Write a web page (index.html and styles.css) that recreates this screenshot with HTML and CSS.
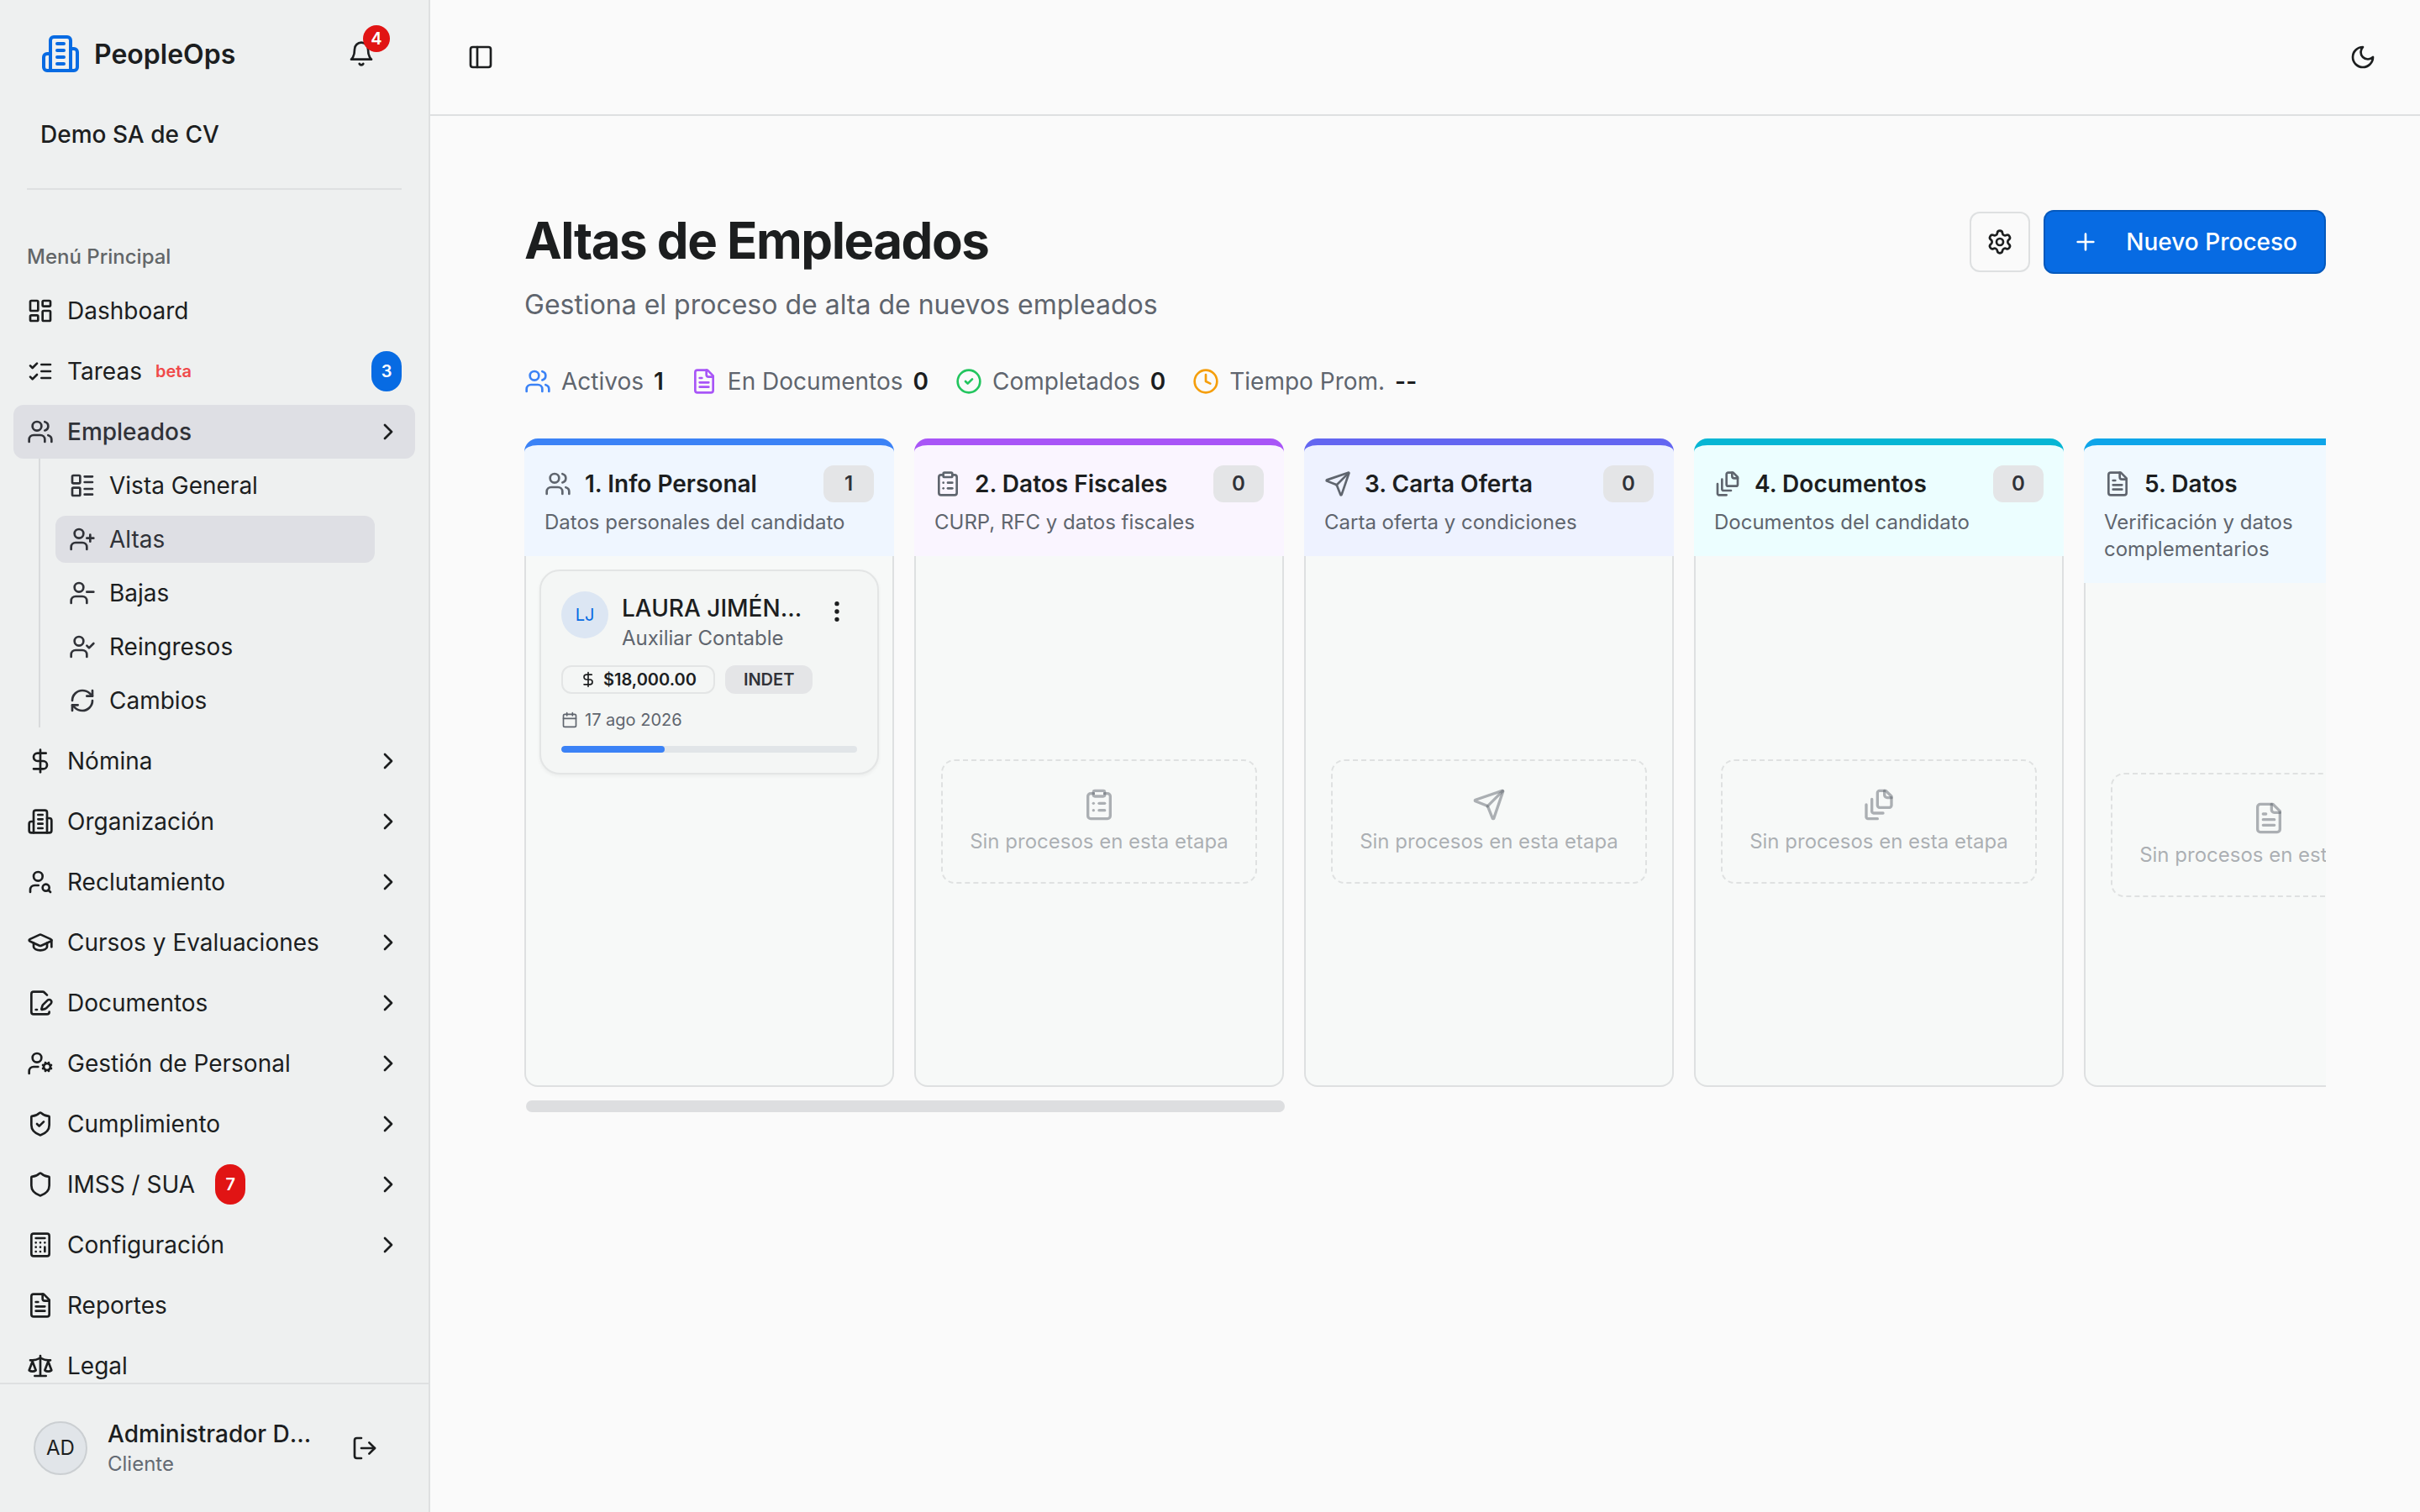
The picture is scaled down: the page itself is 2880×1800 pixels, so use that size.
FILE: index.html
```html
<!DOCTYPE html>
<html lang="es">
<head>
<meta charset="utf-8">
<title>PeopleOps – Altas de Empleados</title>
<link rel="stylesheet" href="styles.css">
</head>
<body>
<svg class="sprite" aria-hidden="true">
  <symbol id="building" viewBox="0 0 24 24"><path d="M6 22V4a2 2 0 0 1 2-2h8a2 2 0 0 1 2 2v18Z"/><path d="M6 12H4a2 2 0 0 0-2 2v6a2 2 0 0 0 2 2h2"/><path d="M18 9h2a2 2 0 0 1 2 2v9a2 2 0 0 1-2 2h-2"/><path d="M10 6h4M10 10h4M10 14h4M10 18h4"/></symbol>
  <symbol id="bell" viewBox="0 0 24 24"><path d="M6 8a6 6 0 0 1 12 0c0 7 3 9 3 9H3s3-2 3-9"/><path d="M10.3 21a1.94 1.94 0 0 0 3.4 0"/></symbol>
  <symbol id="dashboard" viewBox="0 0 24 24"><rect x="3" y="3" width="7" height="9" rx="1"/><rect x="14" y="3" width="7" height="5" rx="1"/><rect x="14" y="12" width="7" height="9" rx="1"/><rect x="3" y="16" width="7" height="5" rx="1"/></symbol>
  <symbol id="checks" viewBox="0 0 24 24"><path d="m3 17 2 2 4-4"/><path d="m3 7 2 2 4-4"/><path d="M13 6h8M13 12h8M13 18h8"/></symbol>
  <symbol id="users" viewBox="0 0 24 24"><path d="M16 21v-2a4 4 0 0 0-4-4H6a4 4 0 0 0-4 4v2"/><circle cx="9" cy="7" r="4"/><path d="M22 21v-2a4 4 0 0 0-3-3.87"/><path d="M16 3.13a4 4 0 0 1 0 7.75"/></symbol>
  <symbol id="layout-list" viewBox="0 0 24 24"><rect x="3" y="3" width="7" height="7" rx="1"/><rect x="3" y="14" width="7" height="7" rx="1"/><path d="M14 4h7M14 9h7M14 15h7M14 20h7"/></symbol>
  <symbol id="user-plus" viewBox="0 0 24 24"><path d="M16 21v-2a4 4 0 0 0-4-4H6a4 4 0 0 0-4 4v2"/><circle cx="9" cy="7" r="4"/><path d="M19 8v6M22 11h-6"/></symbol>
  <symbol id="user-minus" viewBox="0 0 24 24"><path d="M16 21v-2a4 4 0 0 0-4-4H6a4 4 0 0 0-4 4v2"/><circle cx="9" cy="7" r="4"/><path d="M22 11h-6"/></symbol>
  <symbol id="user-check" viewBox="0 0 24 24"><path d="M16 21v-2a4 4 0 0 0-4-4H6a4 4 0 0 0-4 4v2"/><circle cx="9" cy="7" r="4"/><path d="m16 11 2 2 4-4"/></symbol>
  <symbol id="refresh" viewBox="0 0 24 24"><path d="M3 12a9 9 0 0 1 9-9 9.75 9.75 0 0 1 6.74 2.74L21 8"/><path d="M21 3v5h-5"/><path d="M21 12a9 9 0 0 1-9 9 9.75 9.75 0 0 1-6.74-2.74L3 16"/><path d="M8 16H3v5"/></symbol>
  <symbol id="dollar" viewBox="0 0 24 24"><path d="M12 2v20"/><path d="M17 5H9.5a3.5 3.5 0 0 0 0 7h5a3.5 3.5 0 0 1 0 7H6"/></symbol>
  <symbol id="user-search" viewBox="0 0 24 24"><circle cx="10" cy="7" r="4"/><path d="M10.3 15H7a4 4 0 0 0-4 4v2"/><circle cx="17" cy="17" r="3"/><path d="m21 21-1.9-1.9"/></symbol>
  <symbol id="cap" viewBox="0 0 24 24"><path d="M21.42 10.922a1 1 0 0 0-.019-1.838L12.83 5.18a2 2 0 0 0-1.66 0L2.6 9.08a1 1 0 0 0 0 1.832l8.57 3.908a2 2 0 0 0 1.66 0z"/><path d="M22 10v6"/><path d="M6 12.5V16a6 3 0 0 0 12 0v-3.5"/></symbol>
  <symbol id="file-pen" viewBox="0 0 24 24"><path d="m18 5-2.414-2.414A2 2 0 0 0 14.172 2H6a2 2 0 0 0-2 2v16a2 2 0 0 0 2 2h12a2 2 0 0 0 2-2"/><path d="M21.378 12.626a1 1 0 0 0-3.004-3.004l-4.01 4.012a2 2 0 0 0-.506.854l-.837 2.87a.5.5 0 0 0 .62.62l2.87-.837a2 2 0 0 0 .854-.506z"/><path d="M8 18h1"/></symbol>
  <symbol id="user-cog" viewBox="0 0 24 24"><path d="M10 15H6a4 4 0 0 0-4 4v2"/><circle cx="9" cy="7" r="4"/><circle cx="18" cy="15" r="3"/><path d="m14.305 16.53.923-.382M15.228 13.852l-.923-.383M16.852 12.228l-.383-.923M16.852 17.772l-.383.924M19.148 12.228l.383-.923M19.53 18.696l-.382-.924M20.772 13.852l.924-.383M20.772 16.148l.924.383"/></symbol>
  <symbol id="shield" viewBox="0 0 24 24"><path d="M20 13c0 5-3.5 7.5-7.66 8.95a1 1 0 0 1-.67-.01C7.5 20.5 4 18 4 13V6a1 1 0 0 1 1-1c2 0 4.5-1.2 6.24-2.72a1.17 1.17 0 0 1 1.52 0C14.51 3.81 17 5 19 5a1 1 0 0 1 1 1z"/></symbol>
  <symbol id="shield-check" viewBox="0 0 24 24"><path d="M20 13c0 5-3.5 7.5-7.66 8.95a1 1 0 0 1-.67-.01C7.5 20.5 4 18 4 13V6a1 1 0 0 1 1-1c2 0 4.5-1.2 6.24-2.72a1.17 1.17 0 0 1 1.52 0C14.51 3.81 17 5 19 5a1 1 0 0 1 1 1z"/><path d="m9 12 2 2 4-4"/></symbol>
  <symbol id="calculator" viewBox="0 0 24 24"><rect x="4" y="2" width="16" height="20" rx="2"/><path d="M8 6h8M16 14v4M16 10h.01M12 10h.01M8 10h.01M12 14h.01M8 14h.01M12 18h.01M8 18h.01"/></symbol>
  <symbol id="file-text" viewBox="0 0 24 24"><path d="M15 2H6a2 2 0 0 0-2 2v16a2 2 0 0 0 2 2h12a2 2 0 0 0 2-2V7Z"/><path d="M14 2v4a2 2 0 0 0 2 2h4"/><path d="M10 9H8M16 13H8M16 17H8"/></symbol>
  <symbol id="scale" viewBox="0 0 24 24"><path d="m16 16 3-8 3 8c-.87.65-1.92 1-3 1s-2.13-.35-3-1Z"/><path d="m2 16 3-8 3 8c-.87.65-1.92 1-3 1s-2.13-.35-3-1Z"/><path d="M7 21h10M12 3v18"/><path d="M3 7h2c2 0 5-1 7-2 2 1 5 2 7 2h2"/></symbol>
  <symbol id="logout" viewBox="0 0 24 24"><path d="M9 21H5a2 2 0 0 1-2-2V5a2 2 0 0 1 2-2h4"/><path d="m16 17 5-5-5-5"/><path d="M21 12H9"/></symbol>
  <symbol id="chevron" viewBox="0 0 24 24"><path d="m9 18 6-6-6-6"/></symbol>
  <symbol id="panel" viewBox="0 0 24 24"><rect x="3" y="3" width="18" height="18" rx="2"/><path d="M9 3v18"/></symbol>
  <symbol id="moon" viewBox="0 0 24 24"><path d="M12 3a6 6 0 0 0 9 9 9 9 0 1 1-9-9Z"/></symbol>
  <symbol id="settings" viewBox="0 0 24 24"><path d="M9.671 4.136a2.34 2.34 0 0 1 4.659 0 2.34 2.34 0 0 0 3.319 1.915 2.34 2.34 0 0 1 2.33 4.033 2.34 2.34 0 0 0 0 3.831 2.34 2.34 0 0 1-2.33 4.033 2.34 2.34 0 0 0-3.319 1.915 2.34 2.34 0 0 1-4.659 0 2.34 2.34 0 0 0-3.32-1.915 2.34 2.34 0 0 1-2.33-4.033 2.34 2.34 0 0 0 0-3.831A2.34 2.34 0 0 1 6.35 6.051a2.34 2.34 0 0 0 3.319-1.915"/><circle cx="12" cy="12" r="3"/></symbol>
  <symbol id="plus" viewBox="0 0 24 24"><path d="M5 12h14M12 5v14"/></symbol>
  <symbol id="circle-check" viewBox="0 0 24 24"><circle cx="12" cy="12" r="10"/><path d="m9 12 2 2 4-4"/></symbol>
  <symbol id="clock" viewBox="0 0 24 24"><circle cx="12" cy="12" r="10"/><path d="M12 6v6l4 2"/></symbol>
  <symbol id="clipboard" viewBox="0 0 24 24"><rect x="8" y="2" width="8" height="4" rx="1"/><path d="M16 4h2a2 2 0 0 1 2 2v14a2 2 0 0 1-2 2H6a2 2 0 0 1-2-2V6a2 2 0 0 1 2-2h2"/><path d="M12 11h4"/><path d="M12 16h4"/><path d="M8 11h.01"/><path d="M8 16h.01"/></symbol>
  <symbol id="send" viewBox="0 0 24 24"><path d="M14.536 21.686a.5.5 0 0 0 .937-.024l6.5-19a.496.496 0 0 0-.635-.635l-19 6.5a.5.5 0 0 0-.024.937l7.93 3.18a2 2 0 0 1 1.112 1.11z"/><path d="m21.854 2.147-10.94 10.939"/></symbol>
  <symbol id="file-stack" viewBox="0 0 24 24"><path d="M21 7h-3a2 2 0 0 1-2-2V2"/><path d="M21 6v6.5c0 .8-.7 1.5-1.5 1.5h-7c-.8 0-1.5-.7-1.5-1.5v-9c0-.8.7-1.5 1.5-1.5H17Z"/><path d="M7 8v8.8c0 .3.2.6.4.8.2.2.5.4.8.4H15"/><path d="M3 12v8.8c0 .3.2.6.4.8.2.2.5.4.8.4H11"/></symbol>
  <symbol id="calendar" viewBox="0 0 24 24"><path d="M8 2v4M16 2v4"/><rect x="3" y="4" width="18" height="18" rx="2"/><path d="M3 10h18"/></symbol>
  <symbol id="dots" viewBox="0 0 24 24"><circle cx="12" cy="12" r="1"/><circle cx="12" cy="5" r="1"/><circle cx="12" cy="19" r="1"/></symbol>
</svg>
<div class="app">
  <aside class="sidebar">
    <div class="side-head">
      <div class="brand-row">
        <svg class="icon brand-icon"><use href="#building"/></svg>
        <span class="brand">PeopleOps</span>
        <button class="icon-btn bell" type="button" aria-label="Notificaciones"><svg class="icon"><use href="#bell"/></svg><span class="bell-count">4</span></button>
      </div>
      <div class="company">Demo SA de CV</div>
    </div>
    <nav class="nav" aria-label="Menú Principal">
      <h2 class="nav-label">Menú Principal</h2>
      <ul class="nav-list">
        <li><a class="nav-item" href="#"><svg class="icon"><use href="#dashboard"/></svg>Dashboard</a></li>
        <li><a class="nav-item" href="#"><svg class="icon"><use href="#checks"/></svg>Tareas<span class="beta">beta</span><span class="count count-end">3</span></a></li>
        <li>
          <button class="nav-item current" type="button" aria-expanded="true"><svg class="icon"><use href="#users"/></svg>Empleados<svg class="icon chevron"><use href="#chevron"/></svg></button>
          <ul class="sub-list">
            <li><a class="sub-item" href="#"><svg class="icon"><use href="#layout-list"/></svg>Vista General</a></li>
            <li><a class="sub-item selected" href="#" aria-current="page"><svg class="icon"><use href="#user-plus"/></svg>Altas</a></li>
            <li><a class="sub-item" href="#"><svg class="icon"><use href="#user-minus"/></svg>Bajas</a></li>
            <li><a class="sub-item" href="#"><svg class="icon"><use href="#user-check"/></svg>Reingresos</a></li>
            <li><a class="sub-item" href="#"><svg class="icon"><use href="#refresh"/></svg>Cambios</a></li>
          </ul>
        </li>
        <li><button class="nav-item" type="button"><svg class="icon"><use href="#dollar"/></svg>Nómina<svg class="icon chevron"><use href="#chevron"/></svg></button></li>
        <li><button class="nav-item" type="button"><svg class="icon"><use href="#building"/></svg>Organización<svg class="icon chevron"><use href="#chevron"/></svg></button></li>
        <li><button class="nav-item" type="button"><svg class="icon"><use href="#user-search"/></svg>Reclutamiento<svg class="icon chevron"><use href="#chevron"/></svg></button></li>
        <li><button class="nav-item" type="button"><svg class="icon"><use href="#cap"/></svg>Cursos y Evaluaciones<svg class="icon chevron"><use href="#chevron"/></svg></button></li>
        <li><button class="nav-item" type="button"><svg class="icon"><use href="#file-pen"/></svg>Documentos<svg class="icon chevron"><use href="#chevron"/></svg></button></li>
        <li><button class="nav-item" type="button"><svg class="icon"><use href="#user-cog"/></svg>Gestión de Personal<svg class="icon chevron"><use href="#chevron"/></svg></button></li>
        <li><button class="nav-item" type="button"><svg class="icon"><use href="#shield-check"/></svg>Cumplimiento<svg class="icon chevron"><use href="#chevron"/></svg></button></li>
        <li><button class="nav-item" type="button"><svg class="icon"><use href="#shield"/></svg>IMSS / SUA<span class="count count-alert">7</span><svg class="icon chevron"><use href="#chevron"/></svg></button></li>
        <li><button class="nav-item" type="button"><svg class="icon"><use href="#calculator"/></svg>Configuración<svg class="icon chevron"><use href="#chevron"/></svg></button></li>
        <li><a class="nav-item" href="#"><svg class="icon"><use href="#file-text"/></svg>Reportes</a></li>
        <li><a class="nav-item" href="#"><svg class="icon"><use href="#scale"/></svg>Legal</a></li>
      </ul>
    </nav>
    <div class="side-foot">
      <span class="avatar">AD</span>
      <div class="who"><div class="who-name">Administrador Demo</div><div class="who-role">Cliente</div></div>
      <button class="icon-btn" type="button" aria-label="Cerrar sesión"><svg class="icon"><use href="#logout"/></svg></button>
    </div>
  </aside>
  <div class="main">
    <header class="topbar">
      <button class="icon-btn" type="button" aria-label="Alternar menú"><svg class="icon"><use href="#panel"/></svg></button>
      <button class="icon-btn" type="button" aria-label="Cambiar tema"><svg class="icon"><use href="#moon"/></svg></button>
    </header>
    <main class="content">
      <div class="page-head">
        <div>
          <h1 class="title">Altas de Empleados</h1>
          <p class="subtitle">Gestiona el proceso de alta de nuevos empleados</p>
        </div>
        <div class="actions">
          <button class="btn-settings" type="button" aria-label="Configurar etapas"><svg class="icon"><use href="#settings"/></svg></button>
          <button class="btn-primary" type="button"><svg class="icon"><use href="#plus"/></svg>Nuevo Proceso</button>
        </div>
      </div>
      <ul class="stats">
        <li class="stat"><svg class="icon blue"><use href="#users"/></svg>Activos <strong>1</strong></li>
        <li class="stat"><svg class="icon purple"><use href="#file-text"/></svg>En Documentos <strong>0</strong></li>
        <li class="stat"><svg class="icon green"><use href="#circle-check"/></svg>Completados <strong>0</strong></li>
        <li class="stat"><svg class="icon amber"><use href="#clock"/></svg>Tiempo Prom. <strong>--</strong></li>
      </ul>
      <div class="board">
        <section class="column">
          <header class="col-head info">
            <div class="col-row"><svg class="icon"><use href="#users"/></svg><h3 class="col-title">1. Info Personal</h3><span class="col-count">1</span></div>
            <p class="col-desc">Datos personales del candidato</p>
          </header>
          <div class="col-body">
            <article class="card">
              <div class="card-top">
                <span class="card-avatar">LJ</span>
                <div class="card-person"><div class="card-name">LAURA JIMÉNEZ</div><div class="card-role">Auxiliar Contable</div></div>
                <button class="card-menu" type="button" aria-label="Acciones"><svg class="icon"><use href="#dots"/></svg></button>
              </div>
              <div class="chips"><span class="chip"><svg class="icon tiny"><use href="#dollar"/></svg>$18,000.00</span><span class="chip chip-solid">INDET</span></div>
              <div class="card-date"><svg class="icon tiny"><use href="#calendar"/></svg>17 ago 2026</div>
              <div class="progress"><div class="progress-fill" style="width:35%"></div></div>
            </article>
          </div>
        </section>
        <section class="column">
          <header class="col-head fiscal">
            <div class="col-row"><svg class="icon"><use href="#clipboard"/></svg><h3 class="col-title">2. Datos Fiscales</h3><span class="col-count">0</span></div>
            <p class="col-desc">CURP, RFC y datos fiscales</p>
          </header>
          <div class="col-body"><div class="empty"><svg class="icon"><use href="#clipboard"/></svg>Sin procesos en esta etapa</div></div>
        </section>
        <section class="column">
          <header class="col-head offer">
            <div class="col-row"><svg class="icon"><use href="#send"/></svg><h3 class="col-title">3. Carta Oferta</h3><span class="col-count">0</span></div>
            <p class="col-desc">Carta oferta y condiciones</p>
          </header>
          <div class="col-body"><div class="empty"><svg class="icon"><use href="#send"/></svg>Sin procesos en esta etapa</div></div>
        </section>
        <section class="column">
          <header class="col-head docs">
            <div class="col-row"><svg class="icon"><use href="#file-stack"/></svg><h3 class="col-title">4. Documentos</h3><span class="col-count">0</span></div>
            <p class="col-desc">Documentos del candidato</p>
          </header>
          <div class="col-body"><div class="empty"><svg class="icon"><use href="#file-stack"/></svg>Sin procesos en esta etapa</div></div>
        </section>
        <section class="column">
          <header class="col-head data">
            <div class="col-row"><svg class="icon"><use href="#file-text"/></svg><h3 class="col-title">5. Datos</h3></div>
            <p class="col-desc">Verificación y datos complementarios</p>
          </header>
          <div class="col-body"><div class="empty"><svg class="icon"><use href="#file-text"/></svg>Sin procesos en esta etapa</div></div>
        </section>
      </div>
      <div class="scroll-track"><div class="scroll-thumb" style="width:42.2%"></div></div>
    </main>
  </div>
</div>
</body>
</html>
```
FILE: styles.css
```css
:root {
  --text: #1c1e1f;
  --muted: #5f656e;
  --line: #dee0e1;
  --primary: #076be3;
  --danger: #e11414;
}
* { box-sizing: border-box; }
body {
  margin: 0;
  background: #fafafa;
  color: var(--text);
  font: 400 28px/40px Inter, "Liberation Sans", sans-serif;
  font-optical-sizing: none;
}
h1, h2, h3, p, ul { margin: 0; padding: 0; }
ul { list-style: none; }
button { font: inherit; color: inherit; border: 0; background: none; padding: 0; margin: 0; cursor: pointer; }
a { color: inherit; text-decoration: none; }
.sprite { display: none; }
.icon {
  width: 32px; height: 32px; flex: none; display: block;
  fill: none; stroke: currentColor; stroke-width: 2; stroke-linecap: round; stroke-linejoin: round;
}
.icon-btn { display: flex; align-items: center; justify-content: center; width: 64px; height: 64px; flex: none; }

.app { display: flex; height: 100vh; }
.sidebar { width: 512px; flex: none; display: flex; flex-direction: column; background: #eef0f0; border-right: 2px solid var(--line); }
.side-head { display: flex; flex-direction: column; gap: 32px; margin: 0 32px; padding: 32px 16px; border-bottom: 2px solid var(--line); flex: none; }
.brand-row { display: flex; align-items: center; gap: 16px; }
.brand-icon { width: 48px; height: 48px; color: var(--primary); }
.brand { flex: 1; font-size: 32px; font-weight: 600; padding-top: 2px; }
.bell { position: relative; }
.bell-count { position: absolute; top: -2px; right: -2px; width: 32px; height: 32px; border-radius: 50%; background: var(--danger); color: #fff; font-size: 20px; line-height: 32px; font-weight: 600; }
.company { font-weight: 500; line-height: 64px; }
.nav { flex: 1; min-height: 0; overflow: hidden; padding: 48px 16px 0; }
.nav-label { font-size: 24px; line-height: 64px; font-weight: 500; color: #626668; padding: 0 16px; }
.nav-list { display: flex; flex-direction: column; gap: 8px; }
.nav-item { display: flex; align-items: center; gap: 16px; width: 100%; height: 64px; padding: 0 16px; border-radius: 12px; text-align: left; }
.nav-item.current { background: #dedfe4; color: #303238; font-weight: 500; }
.chevron { margin-left: auto; color: var(--text); }
.beta { font-size: 20px; font-weight: 600; color: #f04a4a; }
.count { width: 36px; height: 48px; border-radius: 18px; background: var(--primary); color: #fff; font-size: 20px; line-height: 48px; font-weight: 600; text-align: center; }
.count-end { margin-left: auto; }
.count-alert { background: var(--danger); margin-left: 8px; }
.sub-list { display: flex; flex-direction: column; gap: 8px; margin: 0 48px 0 30px; padding: 4px 0 4px 18px; border-left: 2px solid #d9dbdc; }
.sub-item { display: flex; align-items: center; gap: 16px; height: 56px; padding: 0 16px; border-radius: 12px; }
.sub-item .icon { color: #303238; }
.sub-item.selected { background: #dedfe4; color: #303238; }
.side-foot { display: flex; align-items: center; gap: 24px; flex: none; height: 154px; padding: 0 44px 0 40px; border-top: 2px solid var(--line); }
.avatar { width: 64px; height: 64px; flex: none; border: 2px solid #cbcfd2; border-radius: 50%; background: #e1e5e9; font-size: 24px; line-height: 60px; text-align: center; }
.who { flex: 1; min-width: 0; }
.who-name { font-weight: 500; line-height: 38px; overflow: hidden; white-space: nowrap; text-overflow: ellipsis; }
.who-role { font-size: 24px; line-height: 34px; color: #646a73; }

.main { flex: 1; min-width: 0; display: flex; flex-direction: column; }
.topbar { display: flex; align-items: center; justify-content: space-between; height: 138px; flex: none; padding: 0 36px 0 28px; border-bottom: 2px solid var(--line); }
.content { flex: 1; min-height: 0; padding: 112px; }
.page-head { display: flex; justify-content: space-between; align-items: flex-start; }
.title { font-size: 60px; line-height: 72px; font-weight: 700; letter-spacing: -0.025em; }
.subtitle { font-size: 32px; line-height: 50px; color: var(--muted); margin-top: 16px; }
.actions { display: flex; align-items: center; gap: 16px; }
.btn-settings { display: flex; align-items: center; justify-content: center; width: 72px; height: 72px; border: 2px solid var(--line); border-radius: 12px; }
.btn-primary { display: flex; align-items: center; gap: 32px; height: 76px; padding: 0 32px; border: 2px solid #0559bd; border-radius: 12px; background: var(--primary); color: #fff; font-weight: 500; }
.stats { display: flex; gap: 32px; margin-top: 46px; }
.stat { display: flex; align-items: center; gap: 12px; color: var(--muted); }
.stat strong { color: var(--text); font-weight: 600; }
.blue { color: #3b82f6; }
.purple { color: #a855f7; }
.green { color: #22c55e; }
.amber { color: #f59e0b; }

.board { display: flex; gap: 24px; margin-top: 48px; overflow: hidden; }
.column { display: flex; flex-direction: column; width: 440px; min-height: 772px; flex: none; }
.col-head { padding: 24px; border-top: 8px solid; border-radius: 16px 16px 0 0; }
.info { border-color: #3b82f6; background: #eff6ff; }
.fiscal { border-color: #a855f7; background: #faf5ff; }
.offer { border-color: #6366f1; background: #eef2ff; }
.docs { border-color: #06b6d4; background: #ecfeff; }
.data { border-color: #0ea5e9; background: #f0f9ff; }
.col-row { display: flex; align-items: center; gap: 16px; height: 44px; margin-bottom: 8px; }
.col-row .icon { color: var(--muted); }
.col-title { flex: 1; font-size: 28px; line-height: 40px; font-weight: 600; }
.col-count { width: 60px; height: 44px; border-radius: 12px; background: #e4e5e7; color: #303238; font-size: 24px; line-height: 44px; font-weight: 600; text-align: center; }
.col-desc { font-size: 24px; line-height: 32px; color: var(--muted); }
.col-body { flex: 1; display: flex; flex-direction: column; padding: 16px 16px 14px; border: 2px solid var(--line); border-top: 0; border-radius: 0 0 16px 16px; background: #f7f9f8; }
.empty { display: flex; flex-direction: column; align-items: center; gap: 8px; margin: auto; padding: 32px; border: 2px dashed #dfe1e1; border-radius: 16px; font-size: 24px; line-height: 32px; color: rgba(95, 101, 110, 0.5); white-space: nowrap; }
.empty .icon { width: 40px; height: 40px; }
.card { padding: 24px; border: 2px solid #e3e5e5; border-radius: 24px; background: #f4f6f5; box-shadow: 0 2px 4px rgba(0, 0, 0, 0.05); display: flex; flex-direction: column; gap: 16px; }
.card-top { display: flex; align-items: flex-start; gap: 16px; }
.card-avatar { width: 56px; height: 56px; flex: none; border-radius: 50%; background: #dce6f3; color: var(--primary); font-size: 20px; line-height: 56px; text-align: center; }
.card-person { flex: 1; min-width: 0; }
.card-name { font-weight: 500; overflow: hidden; white-space: nowrap; text-overflow: ellipsis; }
.card-role { font-size: 24px; line-height: 32px; color: var(--muted); }
.card-menu { display: flex; align-items: center; justify-content: center; width: 48px; height: 48px; flex: none; }
.chips { display: flex; gap: 12px; }
.chip { display: flex; align-items: center; gap: 8px; padding: 0 20px; border: 2px solid #e3e5e5; border-radius: 12px; font-size: 20px; line-height: 30px; font-weight: 600; }
.chip-solid { background: #e4e5e7; border-color: #e4e5e7; color: #303238; }
.tiny { width: 20px; height: 20px; }
.card-date { display: flex; align-items: center; gap: 8px; font-size: 20px; line-height: 30px; color: var(--muted); }
.progress { height: 8px; border-radius: 4px; background: #e1e5e8; overflow: hidden; }
.progress-fill { height: 8px; border-radius: 4px; background: #3b82f6; }
.scroll-track { padding: 16px 2px 0; }
.scroll-thumb { height: 14px; border-radius: 7px; background: #dddee0; }
```
